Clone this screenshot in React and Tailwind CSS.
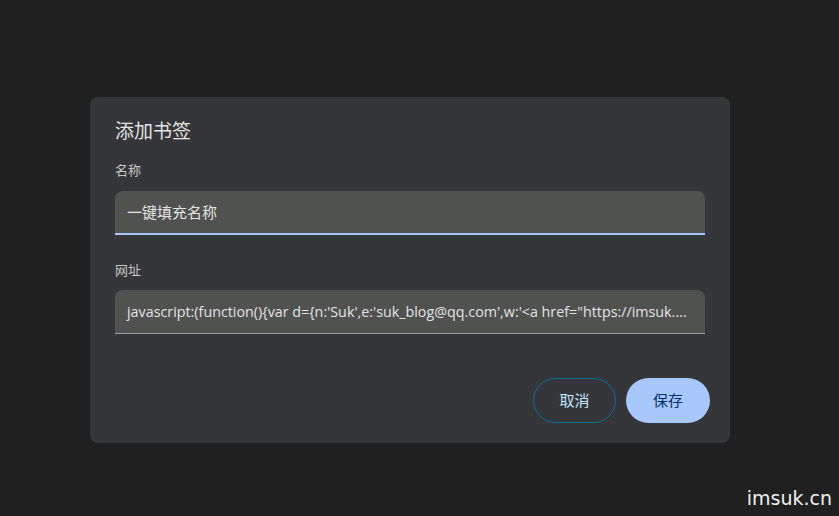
import React from "react";

const font = {
  fontFamily: '"Noto Sans", "Noto Sans CJK SC", "Microsoft YaHei", sans-serif',
};

export default function App() {
  return (
    <div
      className="w-[839px] h-[516px] bg-[#202020] flex flex-col items-start pt-[97px] pl-[90px] relative overflow-hidden"
      style={font}
    >
      <div className="w-[640px] h-[346px] bg-[#35363a] rounded-[8px] px-[25px] pt-[20px] flex flex-col">
        <h2 className="text-[19px] leading-[28px] text-[#e3e3e3] font-normal">添加书签</h2>
        <label className="mt-[16px] text-[13px] leading-[18px] text-[#c4c7c5]">名称</label>
        <div className="mt-[12px] h-[44px] bg-[#505250] rounded-t-[8px] border-b-2 border-[#a8c7fa] flex items-center px-[12px]">
          <span className="text-[15px] text-[#e3e3e3]">一键填充名称</span>
        </div>
        <label className="mt-[26px] text-[13px] leading-[18px] text-[#c4c7c5]">网址</label>
        <div className="mt-[11px] h-[44px] bg-[#505250] rounded-t-[8px] border-b border-[#9a9a9a] flex items-center px-[12px] overflow-hidden">
          <span
            className="text-[14.3px] text-[#e3e3e3] whitespace-nowrap"
            style={{ fontFamily: '"Open Sans", "Noto Sans CJK SC", sans-serif' }}
          >
            javascript:(function(){"{"}var d={"{"}n:'Suk',e:'suk_blog@qq.com',w:'&lt;a href="https://imsuk....
          </span>
        </div>
        <div className="mt-[44px] -mr-[5px] flex justify-end gap-[10px]">
          <button className="w-[83px] h-[45px] rounded-full border border-[#0f6f8f] text-[15px] text-[#c2e7ff]">
            取消
          </button>
          <button className="w-[84px] h-[45px] rounded-full bg-[#a8c7fa] text-[15px] text-[#062e6f]">
            保存
          </button>
        </div>
      </div>
      <span
        className="absolute right-[7px] bottom-[6px] text-[19px] leading-[24px] text-[#f0f0f0]"
        style={{ fontFamily: '"DejaVu Sans", sans-serif' }}
      >
        imsuk.cn
      </span>
    </div>
  );
}
